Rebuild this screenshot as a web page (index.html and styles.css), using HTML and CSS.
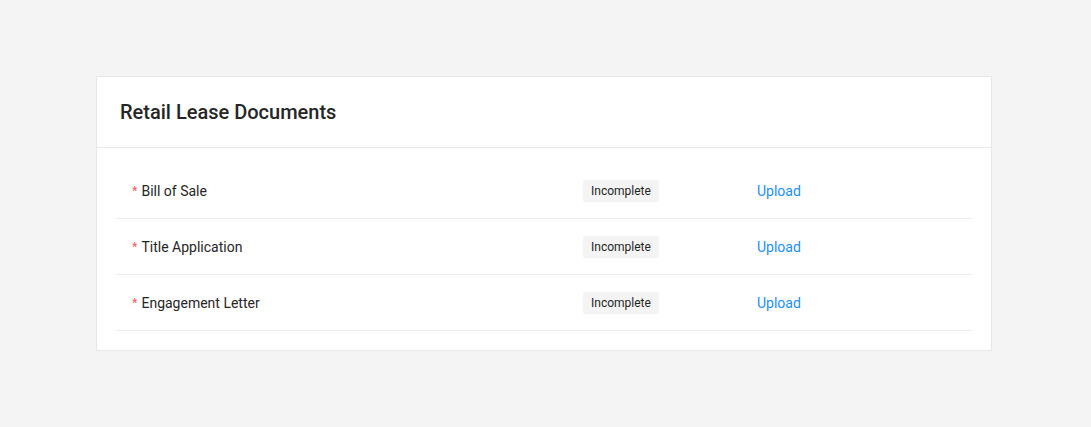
FILE: index.html
```html
<!DOCTYPE html>
<html>
<head>
<meta charset="utf-8">
<link rel="stylesheet" href="styles.css">
</head>
<body>
<div class="card">
  <div class="card-header"><h2 class="title">Retail Lease Documents</h2></div>
  <div class="card-body">
    <div class="row">
      <div class="name"><span class="req">*</span>Bill of Sale</div>
      <div><span class="badge">Incomplete</span></div>
      <div><a class="link" href="#">Upload</a></div>
    </div>
    <div class="row">
      <div class="name"><span class="req">*</span>Title Application</div>
      <div><span class="badge">Incomplete</span></div>
      <div><a class="link" href="#">Upload</a></div>
    </div>
    <div class="row">
      <div class="name"><span class="req">*</span>Engagement Letter</div>
      <div><span class="badge">Incomplete</span></div>
      <div><a class="link" href="#">Upload</a></div>
    </div>
  </div>
</div>
</body>
</html>
```
FILE: styles.css
```css
html, body { margin: 0; padding: 0; }
body {
  background: #f4f4f4;
  font-family: Roboto, "Liberation Sans", Arial, sans-serif;
  color: #262626;
  padding: 76px 0 0 96px;
  height: 427px;
  box-sizing: border-box;
}
.card {
  width: 896px;
  box-sizing: border-box;
  background: #fff;
  border: 1px solid #e8e8e8;
}
.card-header {
  height: 70px;
  border-bottom: 1px solid #e8e8e8;
  display: flex;
  align-items: center;
  padding: 0 23px;
}
.title {
  margin: 0;
  font-size: 20px;
  font-weight: 500;
  color: #262626;
}
.card-body {
  padding: 15px 19px 19px;
}
.row {
  display: grid;
  grid-template-columns: 451px 174px 1fr;
  align-items: center;
  height: 55px;
  border-bottom: 1px solid #ececec;
  padding-left: 16px;
  font-size: 14px;
}
.name { color: #262626; }
.req { color: #ff4d4f; margin-right: 4px; font-family: SimSun, "Liberation Sans", sans-serif; }
.badge {
  display: inline-block;
  background: #f4f4f4;
  border-radius: 2px;
  font-size: 12px;
  line-height: 22px;
  height: 22px;
  padding: 0 8px;
  color: #262626;
}
.link { color: #1890ff; text-decoration: none; }
```
